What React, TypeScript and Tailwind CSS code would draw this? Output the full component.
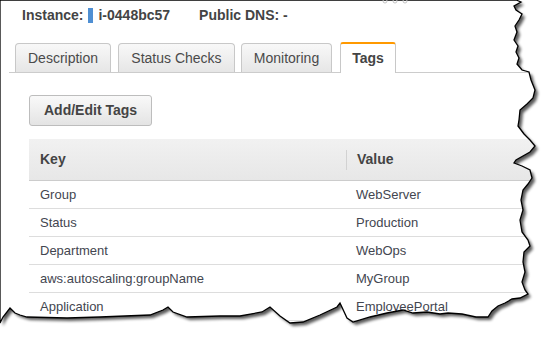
const TORN =
  "M0,0 L516,0 L521,2 L514,6 L516,10 L522,14 L519,20 L515,26 L517,32 L514,40 L518,46 L516,52 L519,58 L517,64 L522,70 L529,72 L531,80 L535,90 L533,98 L527,104 L520,110 L519,120 L518,126 L524,134 L530,140 L535,146 L530,152 L516,160 L514,163 L522,166 L530,170 L532,178 L528,184 L523,190 L521,200 L523,210 L520,220 L522,232 L528,240 L530,246 L524,252 L523,262 L525,272 L522,282 L525,290 L528,294 L520,298 L512,299 L505,303 L498,306 L492,311 L488,317 L476,317 L462,314 L448,313 L440,314 L427,312 L413,313 L403,310 L387,313 L370,317 L353,322 L347,318 L340,303 L337,307 L320,315 L303,322 L290,323 L280,316 L270,307 L262,312 L240,316 L220,316 L187,317 L173,312 L168,307 L163,310 L150,315 L100,317 L67,318 L27,317 L20,315 L15,313 L10,308 L3,317 L0,323 Z"

const tabs = [
  { label: "Description", cls: "w-[96px]" },
  { label: "Status Checks", cls: "w-[117px] ml-[7px]" },
  { label: "Monitoring", cls: "w-[91px] ml-[6px]" },
]

const rows = [
  ["Group", "WebServer"],
  ["Status", "Production"],
  ["Department", "WebOps"],
  ["aws:autoscaling:groupName", "MyGroup"],
  ["Application", "EmployeePortal"],
]

function App() {
  return (
    <div className="relative w-[554px] h-[343px] bg-white overflow-hidden font-['Liberation_Sans',Arial,sans-serif] text-[#444]">
      <svg className="absolute inset-0" width="554" height="343">
        <defs>
          <filter id="tear-shadow" x="-10%" y="-10%" width="120%" height="120%">
            <feGaussianBlur stdDeviation="1.6" />
          </filter>
          <clipPath id="torn-edge" clipPathUnits="userSpaceOnUse">
            <path d={TORN} />
          </clipPath>
        </defs>
        <path d={TORN} transform="translate(3,3)" fill="#000" opacity="0.65" filter="url(#tear-shadow)" />
        <path d={TORN} fill="#fff" />
      </svg>

      <div className="relative w-[554px] h-[343px] [clip-path:url(#torn-edge)]">
        <div className="h-[30px] flex items-center pl-[22px] text-[14px] font-bold">
          <span>Instance:</span>
          <span className="ml-[5px] w-[5px] h-[15px] bg-[#4f8fd3]" />
          <span className="ml-[5px]">i-0448bc57</span>
          <span className="ml-[29px]">Public DNS: -</span>
        </div>

        <div className="mt-[12px] ml-[9px] pl-[6px] flex items-end border-b border-[#cccccc] text-[14px]">
          {tabs.map((t) => (
            <div
              key={t.label}
              className={`${t.cls} h-[29px] flex items-center justify-center rounded-t-[4px] border border-b-0 border-[#c8c8c8] bg-linear-to-b from-[#f8f8f8] to-[#e6e6e6] text-[#4a4a4a]`}
            >
              {t.label}
            </div>
          ))}
          <div className="relative ml-[8px] w-[56px] h-[31px] -mb-px flex items-center justify-center rounded-t-[3px] border border-b-0 border-[#c8c8c8] border-t-2 border-t-[#ff9900] bg-white font-bold">
            Tags
          </div>
        </div>

        <button className="mt-[22px] ml-[29px] h-[31px] px-[14px] flex items-center rounded-[3px] border border-[#bdbdbd] bg-linear-to-b from-[#f9f9f9] to-[#e4e4e4] text-[14px] font-bold text-[#444]">
          Add/Edit Tags
        </button>

        <div className="mt-[13px] ml-[29px] w-[520px]">
          <div className="h-[42px] flex items-center border-b border-[#cccccc] bg-linear-to-b from-[#f1f1f1] to-[#e7e7e7] text-[14px] font-bold">
            <div className="w-[317px] pl-[11px]">Key</div>
            <div className="w-px h-[20px] bg-[#d2d2d2]" />
            <div className="pl-[10px]">Value</div>
          </div>
          {rows.map(([k, v]) => (
            <div key={k} className="h-[28px] flex items-center border-b border-[#dddddd] text-[13px] text-[#434650]">
              <div className="w-[317px] pl-[11px]">{k}</div>
              <div className="pl-[10px]">{v}</div>
            </div>
          ))}
        </div>
      </div>

      <svg className="absolute inset-0 pointer-events-none" width="554" height="343">
        <path d={TORN} fill="none" stroke="#000" strokeWidth="1.3" />
        <g fill="none" stroke="#c4c4c4" strokeWidth="1">
          <circle cx="385" cy="1" r="2" />
          <circle cx="395" cy="1" r="2" />
          <circle cx="405" cy="1" r="2" />
        </g>
      </svg>
    </div>
  )
}

export default App
